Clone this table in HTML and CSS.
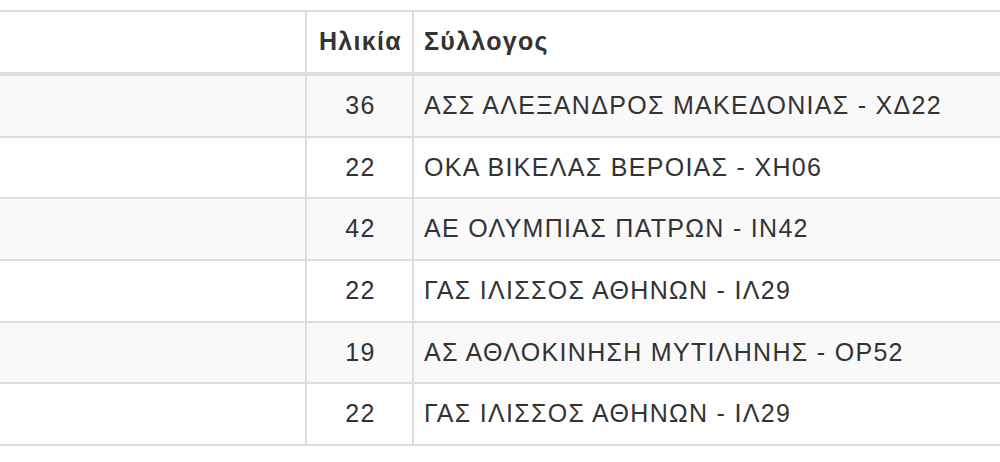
FILE: index.html
```html
<!DOCTYPE html>
<html lang="el">
<head>
<meta charset="utf-8">
<title>Αθλητές</title>
<link rel="stylesheet" href="styles.css">
</head>
<body>
<table class="results">
  <colgroup>
    <col class="col-name">
    <col class="col-age">
    <col class="col-club">
  </colgroup>
  <thead>
    <tr>
      <th></th>
      <th class="age">Ηλικία</th>
      <th class="club">Σύλλογος</th>
    </tr>
  </thead>
  <tbody>
    <tr class="odd"><td></td><td class="age">36</td><td class="club">ΑΣΣ ΑΛΕΞΑΝΔΡΟΣ ΜΑΚΕΔΟΝΙΑΣ - ΧΔ22</td></tr>
    <tr><td></td><td class="age">22</td><td class="club">ΟΚΑ ΒΙΚΕΛΑΣ ΒΕΡΟΙΑΣ - ΧΗ06</td></tr>
    <tr class="odd"><td></td><td class="age">42</td><td class="club">ΑΕ ΟΛΥΜΠΙΑΣ ΠΑΤΡΩΝ - ΙΝ42</td></tr>
    <tr><td></td><td class="age">22</td><td class="club">ΓΑΣ ΙΛΙΣΣΟΣ ΑΘΗΝΩΝ - ΙΛ29</td></tr>
    <tr class="odd"><td></td><td class="age">19</td><td class="club">ΑΣ ΑΘΛΟΚΙΝΗΣΗ ΜΥΤΙΛΗΝΗΣ - ΟΡ52</td></tr>
    <tr><td></td><td class="age">22</td><td class="club">ΓΑΣ ΙΛΙΣΣΟΣ ΑΘΗΝΩΝ - ΙΛ29</td></tr>
  </tbody>
</table>
</body>
</html>
```

FILE: styles.css
```css
html, body {
  margin: 0;
  padding: 0;
  background: #fff;
  overflow: hidden;
}

body {
  font-family: "Liberation Sans", Arial, Helvetica, sans-serif;
  color: #333;
  font-size: 25px;
  letter-spacing: 1.3px;
}

.results {
  margin-top: 10px;
  width: 1000px;
  table-layout: fixed;
  border-collapse: separate;
  border-spacing: 0;
}

.col-name { width: 307px; }
.col-age { width: 107px; }
.col-club { width: 586px; }

.results th,
.results td {
  padding: 0 11px;
  line-height: 33.333px;
  border-right: 2px solid #ddd;
  white-space: nowrap;
  overflow: hidden;
}

.results th:last-child,
.results td:last-child {
  border-right: 0;
}

.results th {
  font-weight: bold;
  text-align: left;
  border-top: 2px solid #ddd;
  border-bottom: 4px solid #ddd;
  padding-top: 13.333px;
  padding-bottom: 13.333px;
}

.results td {
  border-bottom: 2px solid #ddd;
  padding-top: 13.167px;
  padding-bottom: 13.167px;
}

.results .age {
  text-align: center;
  padding-left: 12px;
  padding-right: 10px;
}

.results .club {
  text-align: left;
  padding-left: 10px;
}

.results tr.odd td {
  background: #f9f9f9;
}
```
